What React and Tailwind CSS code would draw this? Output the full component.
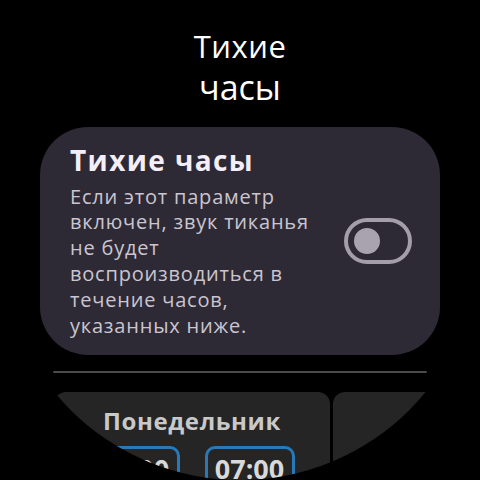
import React from 'react'

const font = { fontFamily: '"Open Sans", "Noto Sans", sans-serif' }

const Toggle = () => (
  <div className="w-[68px] h-[46px] rounded-full border-[4px] border-[#a49eaa] flex items-center px-[6px] shrink-0">
    <div className="w-[26px] h-[26px] rounded-full bg-[#a9a3ae]" />
  </div>
)

const TimeChip = ({ value }) => (
  <div className="w-[90px] h-[44px] rounded-[10px] border-[3px] border-[#2a78b6] flex items-center justify-center text-[27px] font-bold text-[#d9d9d9] leading-none">
    {value}
  </div>
)

export default function App() {
  return (
    <div className="w-[480px] h-[480px] bg-black">
      <div
        className="w-[480px] h-[480px] rounded-full overflow-hidden bg-black flex flex-col items-center"
        style={font}
      >
        {/* Header */}
        <div className="shrink-0 pt-[26px] flex flex-col items-center text-white leading-[41px]">
          <span className="text-[31px] tracking-[0.5px]">Тихие</span>
          <span className="text-[34px]">часы</span>
        </div>

        {/* Setting card */}
        <div className="shrink-0 mt-[19px] w-[400px] h-[228px] rounded-[48px] bg-[#2e2a35] flex items-center pl-[30px] pr-[28px]">
          <div className="flex-1 flex flex-col">
            <div className="text-[28px] font-bold text-[#f3eef7] leading-[32px] tracking-[1.4px]">Тихие часы</div>
            <div className="mt-[8px] text-[20px] text-[#cbc5d0] leading-[25.8px] tracking-[0.8px] whitespace-nowrap">
              Если этот параметр<br />
              включен, звук тиканья<br />
              не будет<br />
              воспроизводиться в<br />
              течение часов,<br />
              указанных ниже.
            </div>
          </div>
          <Toggle />
        </div>

        {/* Divider */}
        <div className="shrink-0 mt-[16px] w-[374px] h-[2px] bg-[#4b4b4b] rounded-full" />

        {/* Day cards */}
        <div className="shrink-0 mt-[19px] w-[480px] flex gap-[3px] pl-[54px]">
          <div className="w-[276px] h-[120px] shrink-0 rounded-[12px] bg-[#252525] flex flex-col items-center pt-[14px]">
            <div className="text-[24px] font-bold text-[#c9c9c9] leading-[30px] tracking-[0.6px]">Понедельник</div>
            <div className="mt-[10px] flex gap-[25px]">
              <TimeChip value="22:00" />
              <TimeChip value="07:00" />
            </div>
          </div>
          <div className="w-[200px] h-[120px] shrink-0 rounded-[12px] bg-[#252525]" />
        </div>
      </div>
    </div>
  )
}
